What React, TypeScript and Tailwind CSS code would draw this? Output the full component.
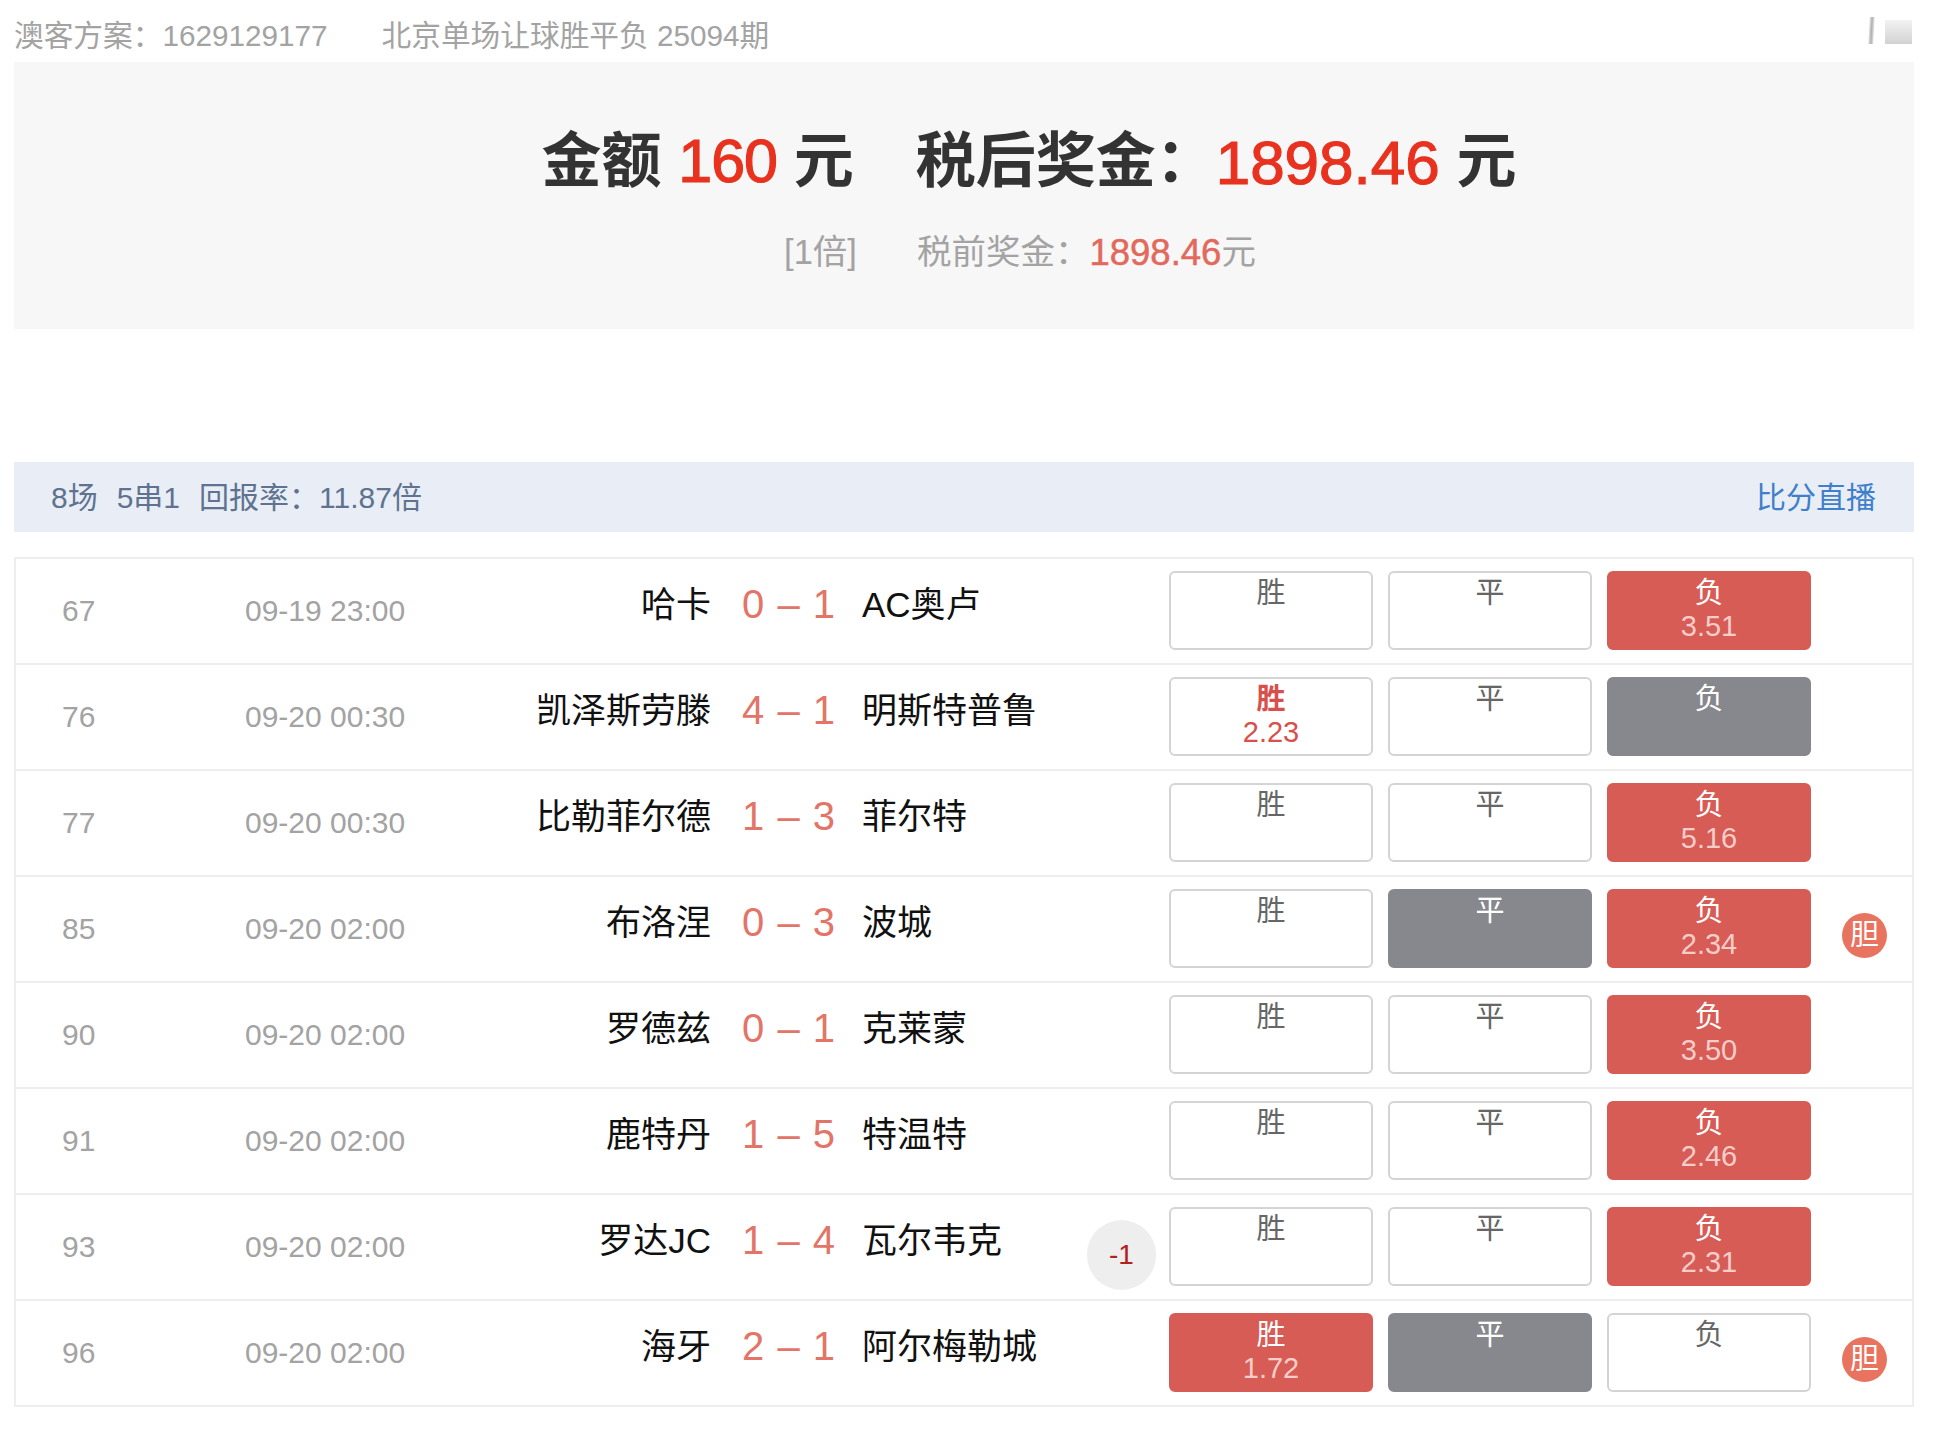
import clsx from "clsx";

type Cell = { label: string; state: "idle" | "hit" | "miss" | "won"; odds?: string };

const idle = (label: string): Cell => ({ label, state: "idle" });
const miss = (label: string): Cell => ({ label, state: "miss" });
const hit = (label: string, odds: string): Cell => ({ label, state: "hit", odds });

const rows: {
  no: string;
  time: string;
  home: string;
  score: string;
  away: string;
  cells: Cell[];
  dan?: boolean;
  handicap?: string;
}[] = [
  { no: "67", time: "09-19 23:00", home: "哈卡", score: "0 – 1", away: "AC奥卢", cells: [idle("胜"), idle("平"), hit("负", "3.51")] },
  { no: "76", time: "09-20 00:30", home: "凯泽斯劳滕", score: "4 – 1", away: "明斯特普鲁", cells: [{ label: "胜", state: "won", odds: "2.23" }, idle("平"), miss("负")] },
  { no: "77", time: "09-20 00:30", home: "比勒菲尔德", score: "1 – 3", away: "菲尔特", cells: [idle("胜"), idle("平"), hit("负", "5.16")] },
  { no: "85", time: "09-20 02:00", home: "布洛涅", score: "0 – 3", away: "波城", cells: [idle("胜"), miss("平"), hit("负", "2.34")], dan: true },
  { no: "90", time: "09-20 02:00", home: "罗德兹", score: "0 – 1", away: "克莱蒙", cells: [idle("胜"), idle("平"), hit("负", "3.50")] },
  { no: "91", time: "09-20 02:00", home: "鹿特丹", score: "1 – 5", away: "特温特", cells: [idle("胜"), idle("平"), hit("负", "2.46")] },
  { no: "93", time: "09-20 02:00", home: "罗达JC", score: "1 – 4", away: "瓦尔韦克", cells: [idle("胜"), idle("平"), hit("负", "2.31")], handicap: "-1" },
  { no: "96", time: "09-20 02:00", home: "海牙", score: "2 – 1", away: "阿尔梅勒城", cells: [hit("胜", "1.72"), miss("平"), idle("负")], dan: true },
];

function OddsCell({ cell }: { cell: Cell }) {
  return (
    <div
      className={clsx(
        "flex h-[79px] w-[204px] flex-col items-center rounded-[6px] pt-[4.5px] text-[29px] leading-[32.5px]",
        cell.state === "idle" && "border-2 border-[#d4d4d4] bg-white text-[#666666]",
        cell.state === "won" && "border-2 border-[#d4d4d4] bg-white text-[#d8504c]",
        cell.state === "hit" && "border-2 border-[#d65c55] bg-[#d65c55] text-white",
        cell.state === "miss" && "border-2 border-[#87888d] bg-[#87888d] text-white"
      )}
    >
      <span className={clsx(cell.state === "won" && "font-bold")}>{cell.label}</span>
      {cell.odds && (
        <span className={clsx(cell.state === "hit" && "text-[#f6cdc9]")}>{cell.odds}</span>
      )}
    </div>
  );
}

export default function App() {
  return (
    <div className="h-[1430px] w-[1936px] bg-white pl-[14px] pr-[22px] font-['Liberation_Sans','Noto_Sans_CJK_SC',sans-serif]">
      <div className="flex h-[62px] items-center justify-between pt-[10px] text-[29.7px] text-[#a3a3a3]">
        <div className="flex gap-[54px]">
          <span>澳客方案：1629129177</span>
          <span>北京单场让球胜平负 25094期</span>
        </div>
        <div className="mb-[12px] flex items-end gap-[11px] pr-[2px]">
          <div className="h-[27px] w-[5px] -skew-x-3 bg-gradient-to-r from-[#e8e8e8] via-[#b0b0b0] to-[#e8e8e8]" />
          <div className="h-[24px] w-[27px] bg-gradient-to-b from-[#f3f3f3] to-[#d2d2d2]" />
        </div>
      </div>

      <div className="flex h-[267px] flex-col items-center bg-[#f7f7f7] pl-[130px] pt-[64px]">
        <div className="flex h-[72px] items-center whitespace-pre text-[60px] font-bold text-[#333333]">
          <span>金额 </span>
          <span className="text-[61px] font-normal tracking-[-1px] text-[#e8321f] [-webkit-text-stroke:1.2px_#e8321f]">160</span>
          <span> 元</span>
          <span className="ml-[62px]">税后奖金：</span>
          <span className="text-[62px] font-normal text-[#e8321f] [-webkit-text-stroke:1.2px_#e8321f]">1898.46</span>
          <span> 元</span>
        </div>
        <div className="mt-[33px] flex h-[44px] items-center pr-[18px] text-[34.5px] text-[#a3a3a3]">
          <span>[1倍]</span>
          <span className="ml-[60px]">税前奖金：</span>
          <span className="text-[36.5px] text-[#e2695c] [-webkit-text-stroke:0.5px_#e2695c]">1898.46</span>
          <span>元</span>
        </div>
      </div>

      <div className="mt-[133px] flex h-[70px] items-center justify-between bg-[#e9eef6] pl-[37px] pr-[38px] pt-[1px] text-[30px]">
        <div className="flex gap-[19px] text-[#5f7391]">
          <span>8场</span>
          <span>5串1</span>
          <span>回报率：11.87倍</span>
        </div>
        <span className="text-[#3f7fcb]">比分直播</span>
      </div>

      <div className="mt-[25px] border-x-2 border-t-2 border-[#eeeeee]">
        {rows.map((row) => (
          <div key={row.no} className="relative flex h-[106px] items-center border-b-2 border-[#eeeeee]">
            <span className="mb-[2px] w-[229px] pl-[46px] text-[30px] text-[#a3a3a3]">{row.no}</span>
            <span className="mb-[2px] w-[200px] text-[30px] text-[#a3a3a3]">{row.time}</span>
            <span className="mb-[11px] w-[266px] text-right text-[35px] text-[#111111]">{row.home}</span>
            <span className="mb-[15px] w-[151px] pl-[5px] text-center text-[40px] tracking-[1px] text-[#e27568]">{row.score}</span>
            <span className="mb-[11px] w-[307px] text-[35px] text-[#111111]">{row.away}</span>
            <div className="mb-[2px] flex gap-[15px]">
              {row.cells.map((cell) => (
                <OddsCell key={cell.label} cell={cell} />
              ))}
            </div>
            {row.dan && (
              <span className="ml-[31px] mt-[13px] flex h-[45px] w-[45px] items-center justify-center rounded-full bg-[#e8735f] text-[29px] text-white">
                胆
              </span>
            )}
            {row.handicap && (
              <span className="absolute left-[1071px] top-[25px] flex h-[70px] w-[69px] items-center justify-center rounded-full bg-[#eeeeee] text-[28px] text-[#b32020]">
                {row.handicap}
              </span>
            )}
          </div>
        ))}
      </div>
    </div>
  );
}
